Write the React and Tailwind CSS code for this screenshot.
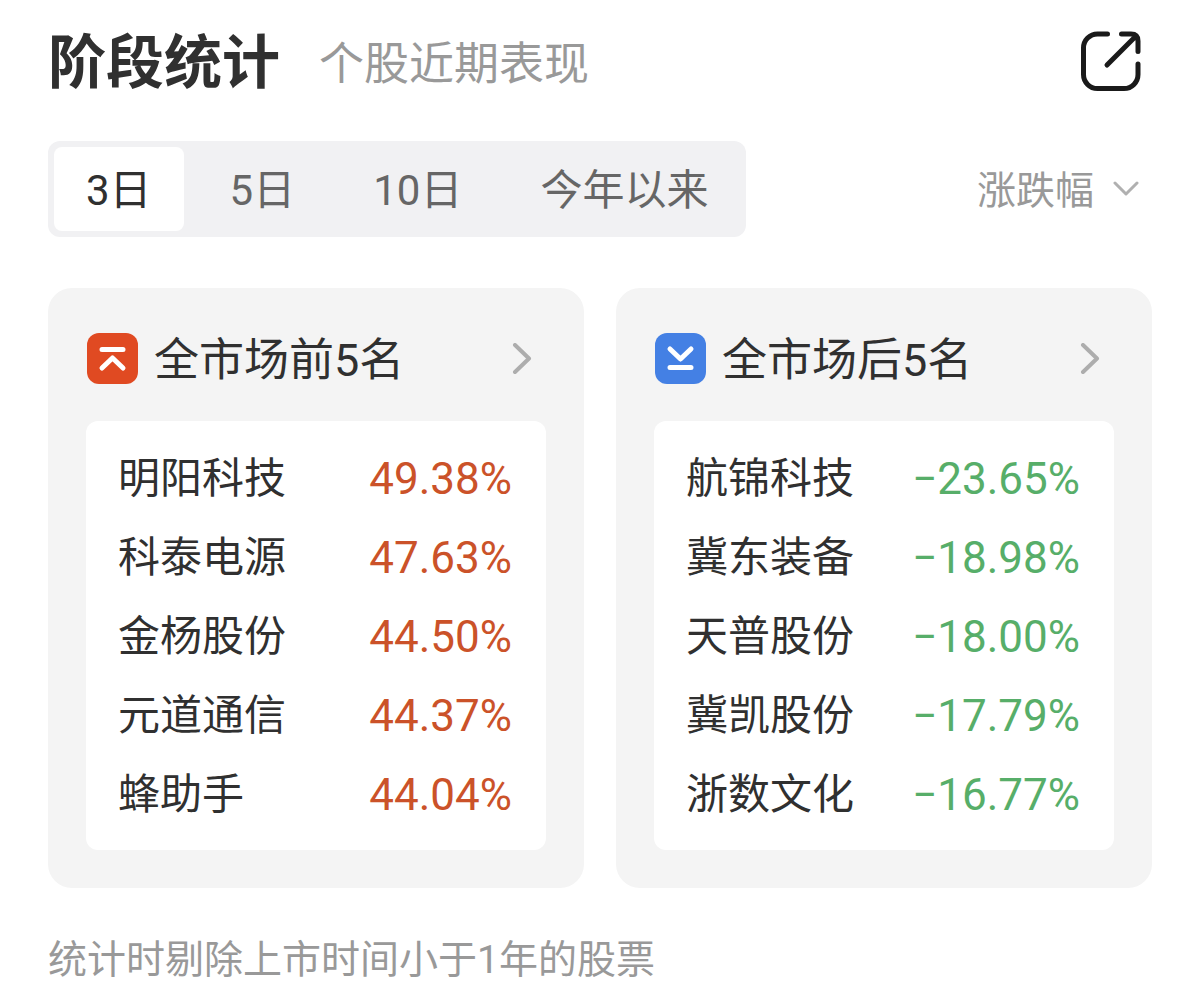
import React, { useState } from 'react';

const periods = ['3日', '5日', '10日', '今年以来'];

const metrics = ['涨跌幅', '换手率', '成交额'];

const boards = [
  {
    id: 'top',
    title: '全市场前5名',
    iconColor: 'bg-[#e04a22]',
    iconPath: 'M15 16.5H36M15 35L25.5 25L36 35',
    valueColor: 'text-[#cb5229]',
    stocks: [
      { name: '明阳科技', change: '49.38%' },
      { name: '科泰电源', change: '47.63%' },
      { name: '金杨股份', change: '44.50%' },
      { name: '元道通信', change: '44.37%' },
      { name: '蜂助手', change: '44.04%' }
    ]
  },
  {
    id: 'bottom',
    title: '全市场后5名',
    iconColor: 'bg-[#4480e4]',
    iconPath: 'M15 16L25.5 26L36 16M15 34.5H36',
    valueColor: 'text-[#57ae69]',
    stocks: [
      { name: '航锦科技', change: '−23.65%' },
      { name: '冀东装备', change: '−18.98%' },
      { name: '天普股份', change: '−18.00%' },
      { name: '冀凯股份', change: '−17.79%' },
      { name: '浙数文化', change: '−16.77%' }
    ]
  }
];

const ShareIcon = () => (
  <svg className="size-16" viewBox="0 0 64 64" fill="none" stroke="#1a1a1a" strokeWidth="5" strokeLinecap="round" strokeLinejoin="round">
    <path d="M27.5 3H17.5A14 14 0 0 0 3.5 17V43.5A14 14 0 0 0 17.5 57.5H44A14 14 0 0 0 58 43.5V33" />
    <path d="M41.5 3H51Q58 3 58 10V20.5M56 5L27 34" />
  </svg>
);

const BoardCard = ({ board }) => (
  <section className="rounded-3xl bg-[#f4f4f4] px-[38px] pt-9 pb-[38px]">
    <button type="button" className="flex h-[69px] w-full items-center pl-px text-left">
      <span className={`size-[51px] shrink-0 rounded-xl ${board.iconColor}`}>
        <svg viewBox="0 0 51 51" fill="none" stroke="white" strokeWidth="5" strokeLinecap="round" strokeLinejoin="round">
          <path d={board.iconPath} />
        </svg>
      </span>
      <span className="ml-4 flex-1 pt-1 text-[45px] leading-[60px] whitespace-nowrap text-[#303030]">{board.title}</span>
      <svg className="mr-3.5 h-8 w-5" viewBox="0 0 20 32" fill="none" stroke="#adadad" strokeWidth="4" strokeLinecap="round" strokeLinejoin="round">
        <path d="M3 2L17 15.5L3 29" />
      </svg>
    </button>
    <ul className="mt-7 rounded-xl bg-white pt-[18px] pr-[34px] pb-4 pl-8">
      {board.stocks.map((stock) => (
        <li key={stock.name} className="flex h-[79px] items-center justify-between whitespace-nowrap">
          <span className="text-[42px] text-[#303030]">{stock.name}</span>
          <span className={`text-[44px] ${board.valueColor}`}>{stock.change}</span>
        </li>
      ))}
    </ul>
  </section>
);

const App = () => {
  const [period, setPeriod] = useState('3日');
  const [metric, setMetric] = useState('涨跌幅');

  return (
    <main className="bg-white px-12 pt-5 pb-1 font-[Roboto,'Noto_Sans_CJK_SC',sans-serif]">
      <header className="flex h-[85px] items-center">
        <h1 className="text-[58px] leading-[84px] font-bold text-[#303030]">阶段统计</h1>
        <p className="ml-[39px] pt-1 text-[45px] text-[#999999]">个股近期表现</p>
        <button type="button" aria-label="分享" className="mr-2 ml-auto">
          <ShareIcon />
        </button>
      </header>

      <div className="mt-9 flex items-center justify-between">
        <div className="flex h-24 gap-3.5 rounded-xl bg-[#f1f1f3] p-1.5">
          {periods.map((item) => (
            <button
              key={item}
              type="button"
              aria-pressed={period === item}
              onClick={() => setPeriod(item)}
              className={`rounded-lg px-8 pt-0.5 text-[42px] whitespace-nowrap ${
                period === item ? 'bg-white text-[#303030]' : 'text-[#666666]'
              }`}
            >
              {item}
            </button>
          ))}
        </div>
        <label className="mr-3 flex items-center gap-[17px]">
          <select
            aria-label="排序指标"
            value={metric}
            onChange={(e) => setMetric(e.target.value)}
            className="appearance-none bg-transparent pt-1 text-[39px] leading-[60px] text-[#999999]"
          >
            {metrics.map((item) => (
              <option key={item}>{item}</option>
            ))}
          </select>
          <svg className="h-4 w-7" viewBox="0 0 28 16" fill="none" stroke="#b0b0b0" strokeWidth="3" strokeLinecap="round" strokeLinejoin="round">
            <path d="M3 2L14 13L25 2" />
          </svg>
        </label>
      </div>

      <div className="mt-[51px] grid grid-cols-2 gap-8">
        {boards.map((board) => (
          <BoardCard key={board.id} board={board} />
        ))}
      </div>

      <p className="mt-[42px] text-[39px] leading-[60px] text-[#999999]">统计时剔除上市时间小于1年的股票</p>
    </main>
  );
};

export default App;
